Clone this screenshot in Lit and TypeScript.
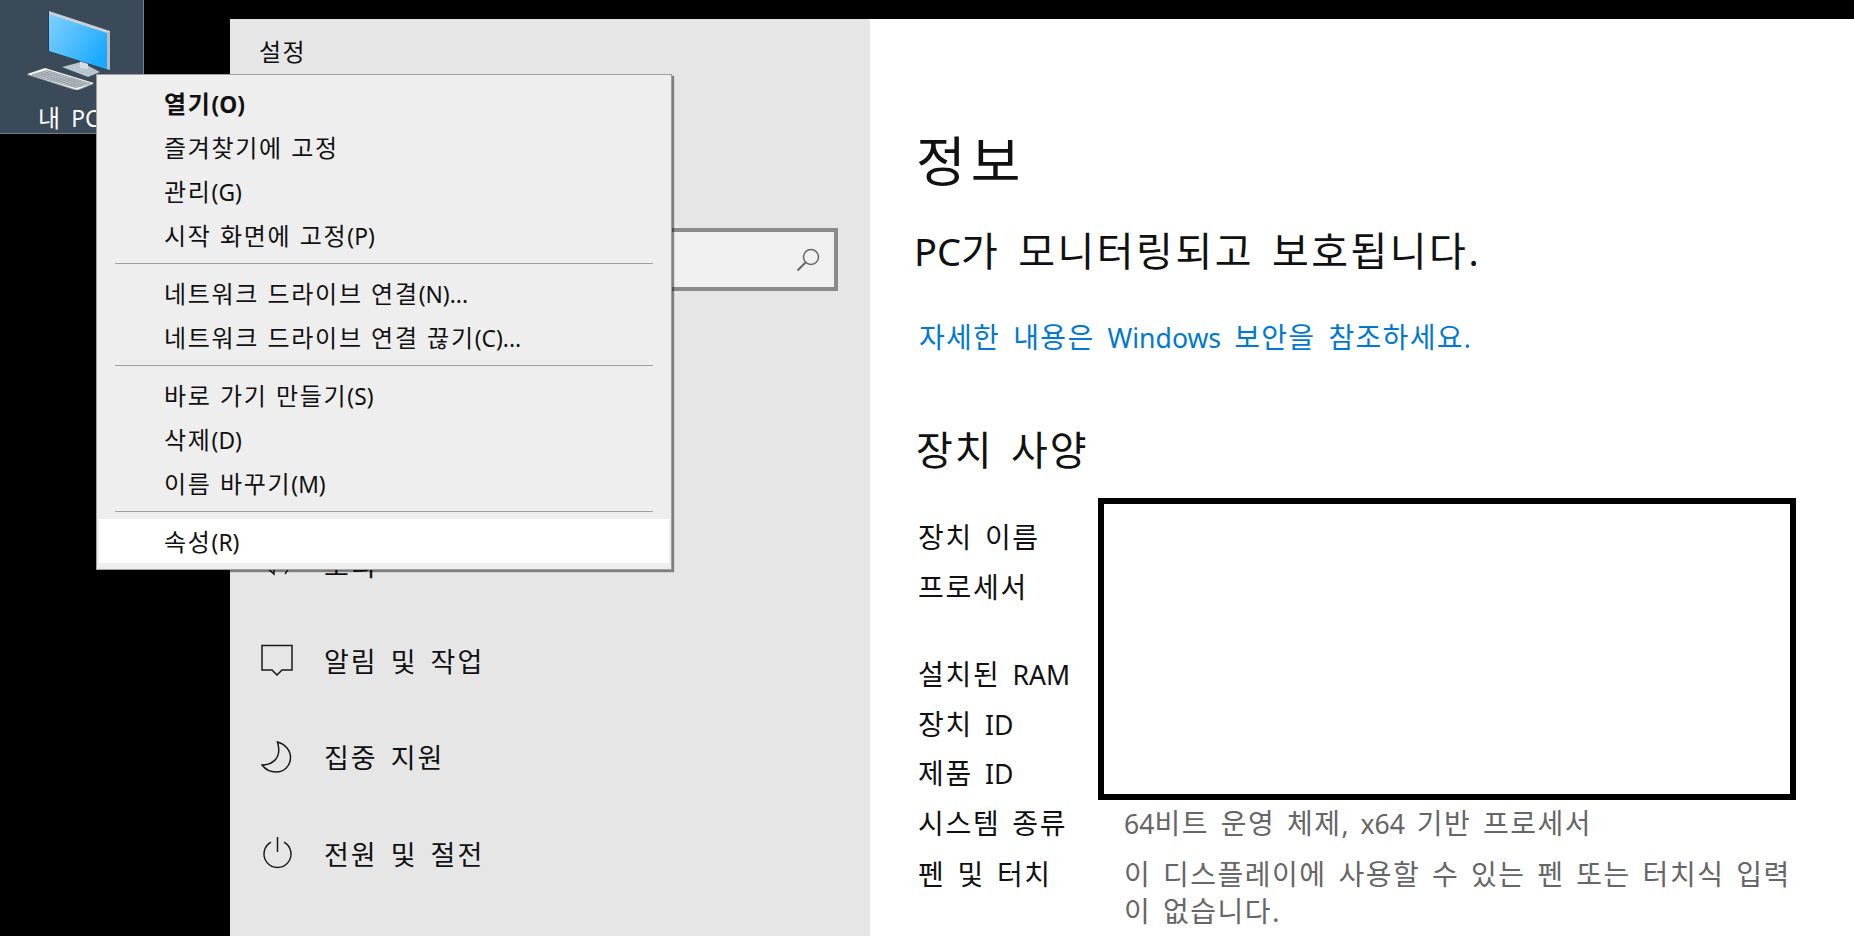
import { LitElement, html, css, svg } from "lit";
import { customElement } from "lit/decorators.js";

const MENU: (string | null)[] = [
  "즐겨찾기에 고정",
  "관리(G)",
  "시작 화면에 고정(P)",
  null,
  "네트워크 드라이브 연결(N)...",
  "네트워크 드라이브 연결 끊기(C)...",
  null,
  "바로 가기 만들기(S)",
  "삭제(D)",
  "이름 바꾸기(M)",
  null,
];

// latin runs are narrower and tighter than the hangul around them
const mixed = (text: string) =>
  text.split(/([A-Za-z0-9().,-]+)/).map((part, i) => (i % 2 ? html`<span class="lat">${part}</span>` : part));

const keys = () => {
  const out = [];
  for (let r = 0; r <= 5; r++) {
    const t = r / 5;
    out.push(svg`<line x1=${32 + t * 15} y1=${75 - t * 4.500} x2=${76 + t * 14} y2=${87.500 - t * 4} />`);
  }
  for (let c = 0; c <= 15; c++) {
    const t = c / 15;
    out.push(svg`<line x1=${32 + t * 44} y1=${75 + t * 12.500} x2=${47 + t * 43} y2=${70.500 + t * 13} />`);
  }
  return out;
};

@customElement("app-root")
class AppRoot extends LitElement {
  renderDesktopIcon() {
    return html`<svg class="pc" viewBox="0 0 144 90" width="144" height="90">
      <defs>
        <linearGradient id="scr" x1="0" y1="0" x2="1" y2="0.6">
          <stop offset="0" stop-color="#7fd0ff" />
          <stop offset="0.55" stop-color="#4bbcff" />
          <stop offset="1" stop-color="#1ba9ff" />
        </linearGradient>
      </defs>
      <polygon points="62,67 81,62 100,72 88,77" fill="#b9c6cf" />
      <polygon points="80,60 88,62 88,69 80,68" fill="#d5dde2" />
      <polygon points="48,11 110,31 110,71 48,51" fill="#2b3a46" />
      <polygon points="49,13 109,33 109,70 49,51" fill="url(#scr)" />
      <polygon points="49,11 110,31 110,34 49,14" fill="#c9d1d6" />
      <polygon points="107,32 110,32 110,70 107,69" fill="#b4bdc3" />
      <polygon points="27,75 45,69 94,84 77,91" fill="#7f8a92" />
      <polygon points="27,74 45,68 94,83 77,90" fill="#eef0f2" />
      <g stroke="#8a949b" stroke-width="0.8">${keys()}</g>
    </svg>`;
  }

  render() {
    return html`
      <div class="desk">
        <div class="tile">
          ${this.renderDesktopIcon()}
          <span class="tile-label">${mixed("내 PC")}</span>
        </div>
      </div>

      <div class="window">
        <aside class="side">
          <div class="app-title">설정</div>
          <div class="search">
            <svg width="26" height="26" viewBox="0 0 26 26" fill="none" stroke="#666" stroke-width="1.5">
              <circle cx="16" cy="10" r="7.5" />
              <path d="M10.5 15.5 L2.5 23.5" stroke-width="2" />
            </svg>
          </div>
          <nav class="nav">
            <div class="nav-row">
              <svg class="ico" viewBox="0 0 32 32" fill="none" stroke="#1a1a1a" stroke-width="1.5">
                <path d="M2 11v9h4l7 6V5L6 11z" /><path d="M19 10q5 6 0 12M24 6q8 10 0 20" />
              </svg>
              <span>소리</span>
            </div>
            <div class="nav-row">
              <svg class="ico" viewBox="0 0 32 32" fill="none" stroke="#1a1a1a" stroke-width="1.5">
                <path d="M1 1.500H31V26H21L16 31L11 26H1z" />
              </svg>
              <span>알림 및 작업</span>
            </div>
            <div class="nav-row">
              <svg class="ico" viewBox="0 0 32 32" fill="none" stroke="#1a1a1a" stroke-width="1.5">
                <path d="M16.500 1C24 3 29.500 9 29.500 16.500C29.500 25 23 31 15 31C9 31 4 28 1 24C8 24 22 20 16.500 1z" />
              </svg>
              <span>집중 지원</span>
            </div>
            <div class="nav-row">
              <svg class="ico" viewBox="0 0 32 32" fill="none" stroke="#1a1a1a" stroke-width="1.5">
                <path d="M10 5.200A13.500 13.500 0 1 0 23 5.200" /><path d="M16.500 0V15" />
              </svg>
              <span>전원 및 절전</span>
            </div>
          </nav>
        </aside>

        <main class="content">
          <h1>정보</h1>
          <div class="status">${mixed("PC가 모니터링되고 보호됩니다.")}</div>
          <div class="link">${mixed("자세한 내용은 Windows 보안을 참조하세요.")}</div>
          <h2>장치 사양</h2>
          <div class="specs">
            <div class="redact"></div>
            <span class="k r1">장치 이름</span>
            <span class="k r2">프로세서</span>
            <span class="k r3">${mixed("설치된 RAM")}</span>
            <span class="k r4">${mixed("장치 ID")}</span>
            <span class="k r5">${mixed("제품 ID")}</span>
            <span class="k r6">시스템 종류</span>
            <span class="v r6">${mixed("64비트 운영 체제, x64 기반 프로세서")}</span>
            <span class="k r7">펜 및 터치</span>
            <span class="v r7">이 디스플레이에 사용할 수 있는 펜 또는 터치식 입력이 없습니다.</span>
          </div>
        </main>
      </div>

      <div class="menu">
        <div class="item bold">${mixed("열기(O)")}</div>
        ${MENU.map((m) => (m === null ? html`<div class="sep"></div>` : html`<div class="item">${mixed(m)}</div>`))}
        <div class="item active">${mixed("속성(R)")}</div>
      </div>
    `;
  }

  static styles = css`
    :host {
      display: flex;
      position: relative;
      width: 1854px;
      height: 936px;
      overflow: hidden;
      background: #000;
      font-family: "Noto Sans", "Noto Sans CJK KR", sans-serif;
      color: #111;
    }
    .lat {
      font-size: 0.95em;
      letter-spacing: 0;
    }
    .desk {
      width: 230px;
      flex: none;
    }
    .tile {
      width: 144px;
      height: 134px;
      box-sizing: border-box;
      border: 1px solid #6f8090;
      border-left: 0;
      border-top: 0;
      background: #3b4a59;
      display: flex;
      flex-direction: column;
      align-items: flex-start;
    }
    .pc {
      flex: none;
    }
    .tile-label {
      margin: 13px 0 0 38px;
      color: #fff;
      font-size: 24px;
      line-height: 30px;
      white-space: nowrap;
      word-spacing: 5px;
    }
    .window {
      flex: 1;
      display: flex;
      margin-top: 19px;
      min-width: 0;
    }
    .side {
      width: 640px;
      flex: none;
      background: #e6e6e6;
      box-sizing: border-box;
      padding: 0 32px 0 29px;
    }
    .app-title {
      margin-top: 19px;
      height: 28px;
      line-height: 28px;
      font-size: 24px;
      letter-spacing: 1.500px;
    }
    .search {
      margin-top: 162px;
      height: 63px;
      box-sizing: border-box;
      border: 4px solid #8a8a8a;
      background: #f0f0f0;
      display: flex;
      align-items: center;
      justify-content: flex-end;
      padding-right: 13px;
    }
    .nav {
      margin-top: 225px;
    }
    .nav-row {
      height: 96.300px;
      display: flex;
      align-items: center;
      gap: 31px;
      font-size: 27px;
      letter-spacing: 2px;
      word-spacing: 4px;
    }
    .ico {
      width: 32px;
      height: 32px;
      flex: none;
      margin-left: 2px;
    }
    .content {
      flex: 1;
      background: #fff;
      box-sizing: border-box;
      padding: 0 58px 0 46px;
    }
    h1 {
      margin: 111px 0 0;
      font-size: 54px;
      line-height: 62px;
      font-weight: 400;
      letter-spacing: 5px;
    }
    .status {
      margin-top: 34px;
      margin-left: -2px;
      font-size: 40px;
      line-height: 50px;
      letter-spacing: 2.500px;
      word-spacing: 5px;
      white-space: nowrap;
    }
    .link {
      margin-top: 41px;
      margin-left: 3px;
      font-size: 28px;
      line-height: 40px;
      letter-spacing: 1.300px;
      word-spacing: 4.500px;
      color: #0078d4;
      white-space: nowrap;
    }
    h2 {
      margin: 67px 0 0;
      font-size: 40px;
      line-height: 50px;
      font-weight: 400;
      letter-spacing: 2px;
      word-spacing: 5px;
    }
    .specs {
      position: relative;
      margin-top: 44px;
      margin-left: 2px;
      display: grid;
      grid-template-columns: 206px 672px;
      grid-template-rows: 50px 87px 50px 49px 50px 51px auto;
      font-size: 28px;
      line-height: 37px;
      letter-spacing: 1.700px;
      word-spacing: 3px;
    }
    .k {
      grid-column: 1;
      white-space: nowrap;
    }
    .v {
      grid-column: 2;
      color: #666;
      letter-spacing: 1.500px;
    }
    .r1 { grid-row: 1; }
    .r2 { grid-row: 2; }
    .r3 { grid-row: 3; }
    .r4 { grid-row: 4; }
    .r5 { grid-row: 5; }
    .r6 { grid-row: 6; }
    .r7 { grid-row: 7; }
    .redact {
      position: absolute;
      left: 180px;
      top: -21px;
      width: 698px;
      height: 302px;
      box-sizing: border-box;
      border: 6px solid #000;
      background: #fff;
    }
    .menu {
      position: absolute;
      left: 96px;
      top: 74px;
      width: 576px;
      box-sizing: border-box;
      padding: 6px 2px;
      background: #eee;
      border: 1px solid #a0a0a0;
      box-shadow: 2px 2px 1px rgba(0, 0, 0, 0.45);
      font-size: 24px;
      letter-spacing: 1.700px;
      word-spacing: 0.500px;
    }
    .item {
      height: 44px;
      line-height: 46px;
      padding-left: 65px;
      white-space: nowrap;
    }
    .bold {
      font-weight: 700;
    }
    .active {
      background: #fff;
    }
    .sep {
      height: 1px;
      margin: 6px 16px 7px;
      background: #a0a0a0;
    }
  `;
}

export default AppRoot;
